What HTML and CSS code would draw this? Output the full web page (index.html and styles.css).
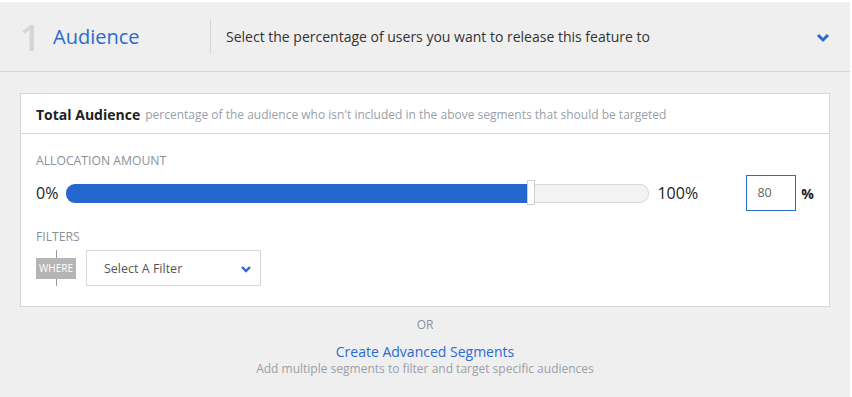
FILE: index.html
```html
<!DOCTYPE html>
<html>
<head>
<meta charset="utf-8">
<link rel="stylesheet" href="styles.css">
</head>
<body>
<div class="page">
  <div class="step-header">
    <div class="step-num">1</div>
    <div class="step-title">Audience</div>
    <div class="step-divider"></div>
    <div class="step-desc">Select the percentage of users you want to release this feature to</div>
    <svg class="step-chevron" width="14" height="10" viewBox="0 0 14 10"><path d="M2 2 L7 7 L12 2" fill="none" stroke="#2a6ad3" stroke-width="3"/></svg>
  </div>
  <div class="content">
    <div class="card">
      <div class="card-head"><span class="card-title">Total Audience</span><span class="card-sub">percentage of the audience who isn't included in the above segments that should be targeted</span></div>
      <div class="card-body">
        <div class="label">ALLOCATION AMOUNT</div>
        <div class="alloc-row">
          <span class="pct-min">0%</span>
          <div class="track">
            <div class="fill" style="width:79.3%"></div>
            <div class="handle" style="left:79.3%"></div>
          </div>
          <span class="pct-max">100%</span>
          <div class="num-input">80</div>
          <span class="pct-sign">%</span>
        </div>
        <div class="label filters-label">FILTERS</div>
        <div class="filter-row">
          <div class="where"><span class="where-badge">WHERE</span></div>
          <div class="select">Select A Filter
            <svg class="sel-chevron" width="12" height="8" viewBox="0 0 12 8"><path d="M2 2 L6 6 L10 2" fill="none" stroke="#2a6ad3" stroke-width="2.4"/></svg>
          </div>
        </div>
      </div>
    </div>
    <div class="or">OR</div>
    <div class="adv-link">Create Advanced Segments</div>
    <div class="adv-desc">Add multiple segments to filter and target specific audiences</div>
  </div>
</div>
</body>
</html>
```
FILE: styles.css
```css
html, body { margin: 0; padding: 0; background: #fff; }
body { font-family: "Open Sans", "DejaVu Sans", sans-serif; }
.page {
  margin-top: 2px;
  width: 850px;
  height: 395px;
  background: #efefef;
  overflow: hidden;
}
.step-header {
  display: flex;
  align-items: center;
  height: 69px;
  border-bottom: 1px solid #d7d7d7;
  padding-left: 20px;
  padding-right: 20px;
}
.step-num {
  font-size: 36px;
  font-weight: 600;
  color: #d5d5d5;
  width: 33px;
  line-height: 1;
  margin-top: 2px;
}
.step-title {
  font-size: 20px;
  color: #2a6ad3;
  width: 157px;
}
.step-divider {
  width: 1px;
  height: 35px;
  background: #d5d5d5;
  margin-right: 15px;
}
.step-desc {
  font-size: 14px;
  color: #333;
  flex: 1;
}
.step-chevron { margin-top: 2px; }
.content {
  padding: 21px 20px 0 20px;
  display: flex;
  flex-direction: column;
  align-items: center;
}
.card {
  align-self: stretch;
  background: #fff;
  border: 1px solid #d6d6d6;
}
.card-head {
  border-bottom: 1px solid #d6d6d6;
  display: flex;
  align-items: center;
  padding-left: 15px;
  padding-top: 1px;
  box-sizing: border-box;
  height: 40px;
}
.card-title { font-size: 14px; font-weight: 700; color: #222; margin-right: 5px; }
.card-sub { font-size: 12px; color: #9aa0a8; }
.card-body { padding: 19px 15px 20px 15px; }
.label { font-size: 12.2px; color: #8a9099; line-height: 16px; }
.alloc-row {
  display: flex;
  align-items: center;
  height: 36px;
  margin-top: 6px;
}
.pct-min { font-size: 16px; color: #222; width: 30px; }
.track {
  position: relative;
  width: 582px;
  height: 17px;
  border: 1px solid #d8d8d8;
  border-radius: 9px;
  background: #f3f3f3;
}
.fill {
  position: absolute;
  left: -1px; top: -1px; bottom: -1px;
  background: #2566cf;
  border-radius: 9px 0 0 9px;
}
.handle {
  position: absolute;
  top: -5px;
  width: 6px;
  height: 23px;
  margin-left: -1px;
  background: #fff;
  border: 1px solid #cfcfcf;
}
.pct-max { font-size: 16px; color: #222; margin-left: 8px; width: 89px; }
.num-input {
  width: 38px;
  height: 34px;
  border: 1px solid #2a6ad3;
  font-size: 12.5px;
  color: #666;
  line-height: 34px;
  padding-left: 10px;
}
.pct-sign { font-size: 14px; font-weight: 700; color: #222; margin-left: 5px; }
.filters-label { margin-top: 18px; }
.filter-row { display: flex; align-items: center; margin-top: 5px; }
.where {
  width: 40px;
  height: 36px;
  display: flex;
  align-items: center;
  justify-content: center;
  background: linear-gradient(#999, #999) center / 1px 100% no-repeat;
}
.where-badge {
  width: 40px;
  height: 21px;
  background: #b5b5b5;
  color: #fff;
  font-size: 10px;
  line-height: 21px;
  text-align: center;
}
.select {
  margin-left: 10px;
  width: 148px;
  height: 34px;
  border: 1px solid #d6d6d6;
  padding-left: 17px;
  font-size: 12.5px;
  color: #555;
  display: flex;
  align-items: center;
  justify-content: space-between;
  padding-right: 8px;
}
.sel-chevron { margin-top: 1px; }
.or { font-size: 12px; color: #8a9099; margin-top: 10px; line-height: 16px; }
.adv-link { font-size: 14px; color: #2a6ad3; margin-top: 10px; line-height: 18px; }
.adv-desc { font-size: 12px; color: #9aa0a8; line-height: 16px; }
```
